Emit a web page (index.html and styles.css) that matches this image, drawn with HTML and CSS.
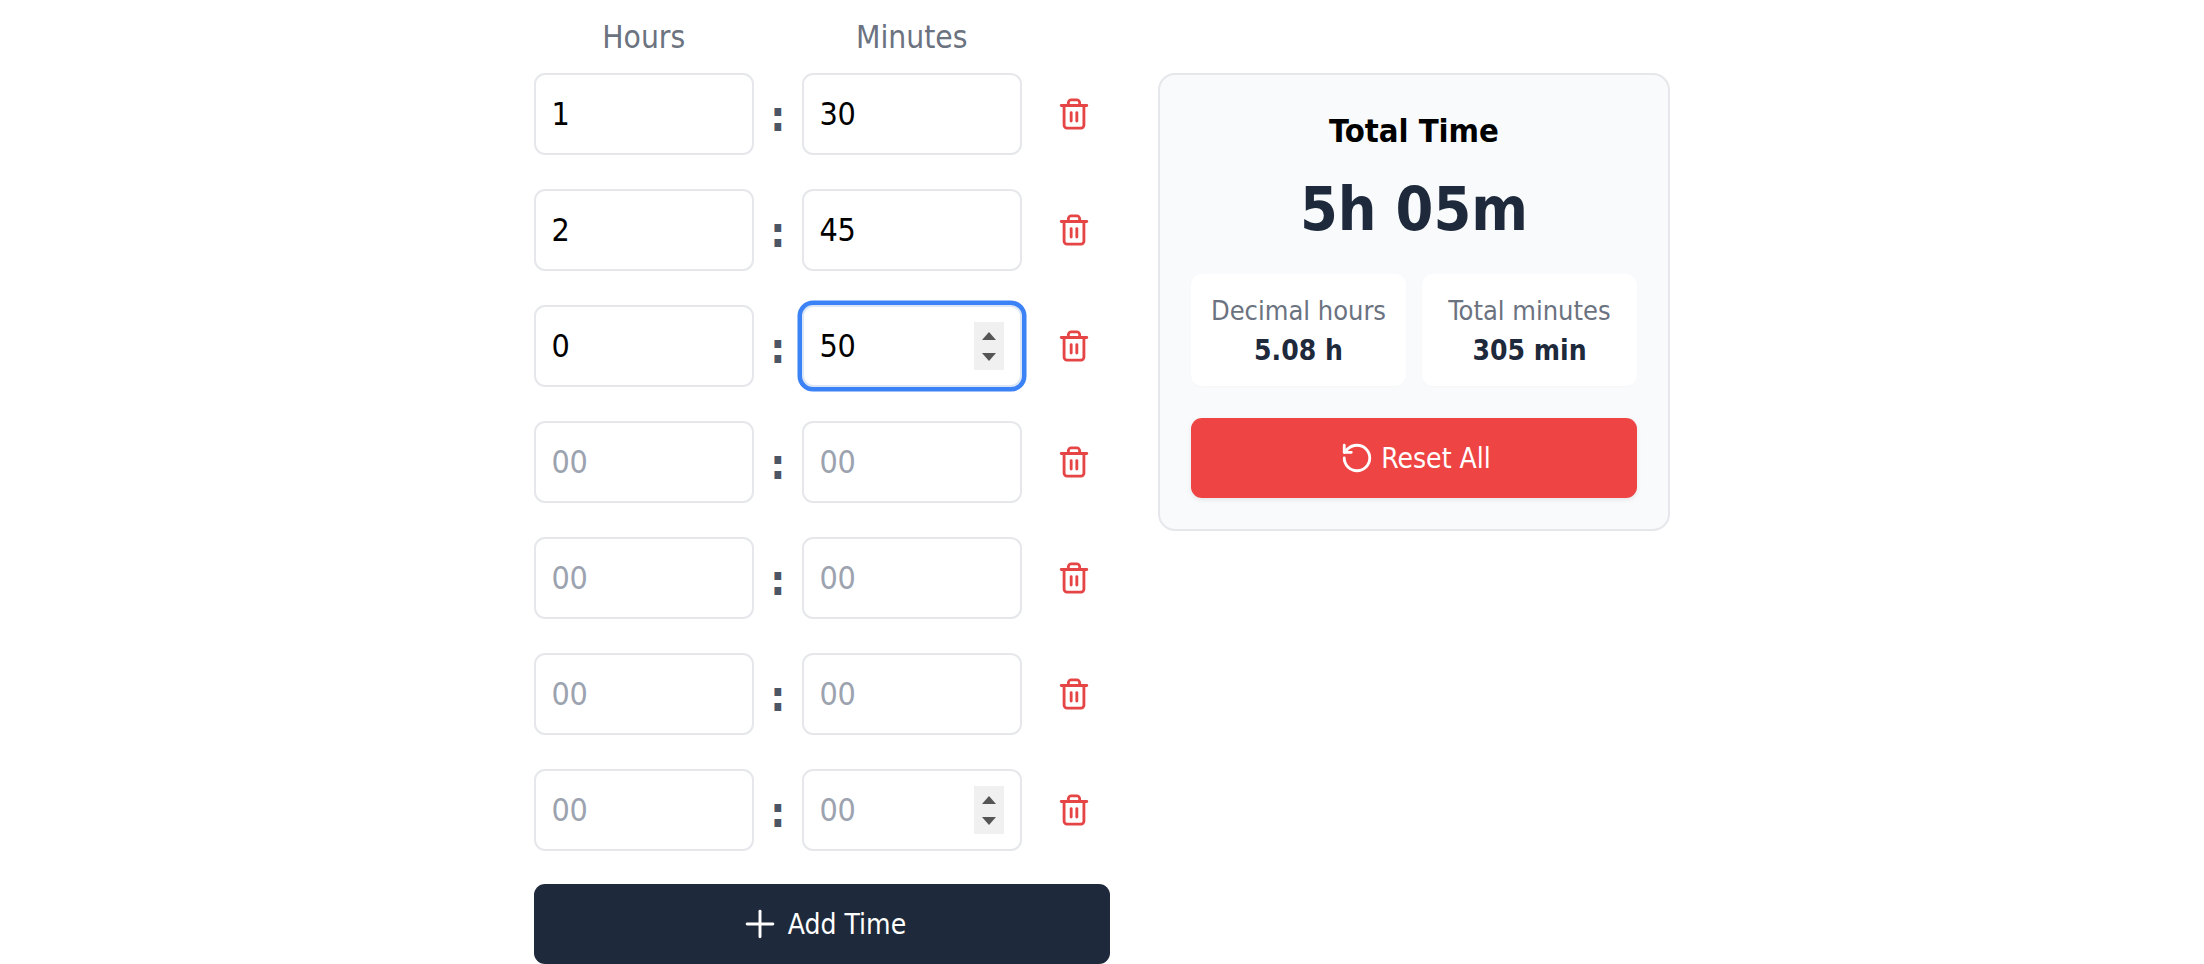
FILE: index.html
```html
<!DOCTYPE html>
<html lang="en">
<head>
<meta charset="utf-8">
<title>Time Calculator</title>
<link rel="stylesheet" href="styles.css">
</head>
<body>
<svg class="sprite" width="0" height="0" aria-hidden="true">
  <symbol id="trash" viewBox="0 0 24 24"><path d="M3 6h18"/><path d="M19 6v14c0 1-1 2-2 2H7c-1 0-2-1-2-2V6"/><path d="M8 6V4c0-1 1-2 2-2h4c1 0 2 1 2 2v2"/><path d="M10 11v6"/><path d="M14 11v6"/></symbol>
</svg>
<main class="layout">
  <section class="entries">
    <div class="labels">
      <span class="label">Hours</span>
      <span class="label label-min">Minutes</span>
    </div>
    <div class="rows">
      <div class="row">
        <input class="field" type="number" value="1" placeholder="00"><span class="colon">:</span>
        <input class="field" type="number" value="30" placeholder="00">
        <button class="del" type="button"><svg class="trash"><use href="#trash"/></svg></button>
      </div>
      <div class="row">
        <input class="field" type="number" value="2" placeholder="00"><span class="colon">:</span>
        <input class="field" type="number" value="45" placeholder="00">
        <button class="del" type="button"><svg class="trash"><use href="#trash"/></svg></button>
      </div>
      <div class="row">
        <input class="field" type="number" value="0" placeholder="00"><span class="colon">:</span>
        <div class="wrap">
          <input class="field field-focus" type="number" value="50" placeholder="00">
          <span class="spin"><i class="up"></i><i class="down"></i></span>
        </div>
        <button class="del" type="button"><svg class="trash"><use href="#trash"/></svg></button>
      </div>
      <div class="row">
        <input class="field" type="number" placeholder="00"><span class="colon">:</span>
        <input class="field" type="number" placeholder="00">
        <button class="del" type="button"><svg class="trash"><use href="#trash"/></svg></button>
      </div>
      <div class="row">
        <input class="field" type="number" placeholder="00"><span class="colon">:</span>
        <input class="field" type="number" placeholder="00">
        <button class="del" type="button"><svg class="trash"><use href="#trash"/></svg></button>
      </div>
      <div class="row">
        <input class="field" type="number" placeholder="00"><span class="colon">:</span>
        <input class="field" type="number" placeholder="00">
        <button class="del" type="button"><svg class="trash"><use href="#trash"/></svg></button>
      </div>
      <div class="row">
        <input class="field" type="number" placeholder="00"><span class="colon">:</span>
        <div class="wrap">
          <input class="field" type="number" placeholder="00">
          <span class="spin"><i class="up"></i><i class="down"></i></span>
        </div>
        <button class="del" type="button"><svg class="trash"><use href="#trash"/></svg></button>
      </div>
      <button class="add" type="button">
        <svg class="plus" viewBox="0 0 24 24"><path d="M5 12h14"/><path d="M12 5v14"/></svg>
        <span>Add Time</span>
      </button>
    </div>
  </section>
  <aside class="card">
    <h2 class="title">Total Time</h2>
    <p class="total">5h 05m</p>
    <div class="stats">
      <div class="stat"><span class="stat-label">Decimal hours</span><strong class="stat-value">5.08 h</strong></div>
      <div class="stat"><span class="stat-label">Total minutes</span><strong class="stat-value">305 min</strong></div>
    </div>
    <button class="reset" type="button">
      <svg class="ccw" viewBox="0 0 24 24"><path d="M3 12a9 9 0 1 0 9-9 9.75 9.75 0 0 0-6.74 2.74L3 8"/><path d="M3 3v5h5"/></svg>
      <span>Reset All</span>
    </button>
  </aside>
</main>
</body>
</html>
```
FILE: styles.css
```css
* { box-sizing: border-box; }
html, body { margin: 0; height: 964px; overflow: hidden; background: #fff; }
body { font-family: "DejaVu Sans Condensed", "DejaVu Sans", sans-serif; font-stretch: condensed; color: #000; }
.sprite { position: absolute; }
.layout { display: flex; gap: 48px; width: 1136px; margin: 0 auto; align-items: flex-start; }
.entries { width: 576px; flex: none; }
.labels { display: flex; height: 73px; padding-top: 18px; }
.label { width: 219.5px; text-align: center; font-size: 31.5px; line-height: 38px; color: #6b7280; }
.label-min { margin-left: 48.5px; }
.rows { display: flex; flex-direction: column; gap: 34px; }
.row { display: flex; align-items: center; height: 82px; }
.wrap { position: relative; width: 219.5px; height: 82px; flex: none; }
.field {
  width: 219.5px; height: 82px; flex: none; appearance: textfield;
  padding: 0 15.5px; border: 2.8px solid #e5e7eb; border-radius: 11px; background: #fff;
  font: inherit; font-size: 32px; letter-spacing: -0.4px; color: #000; outline: none;
}
.field::placeholder { color: #9ca3af; opacity: 1; }
.field::-webkit-inner-spin-button, .field::-webkit-outer-spin-button { appearance: none; margin: 0; }
.field-focus { border-color: #dbe6f6; box-shadow: 0 0 0 4.5px #3b82f6; }
.spin {
  position: absolute; left: 172px; top: 17px; width: 30px; height: 48px;
  display: flex; flex-direction: column; align-items: center; justify-content: center; gap: 13px; background: #f0f0f0;
}
.up { border: 7px solid transparent; border-top: 0; border-bottom: 8px solid #555; }
.down { border: 7px solid transparent; border-bottom: 0; border-top: 8px solid #555; }
.colon { width: 48.5px; flex: none; text-align: center; font-size: 42px; font-weight: 700; line-height: 1; color: #4b5563; padding-top: 6px; }
.del { margin-left: 32.5px; width: 40px; height: 40px; padding: 0; border: 0; background: none; display: flex; align-items: center; justify-content: center; }
.trash { width: 34px; height: 34px; fill: none; stroke: #e64545; stroke-width: 2; stroke-linecap: round; stroke-linejoin: round; }
.add, .reset {
  height: 80px; width: 100%; border: 0; border-radius: 11px; display: flex; align-items: center; justify-content: center;
  color: #fff; font: inherit; font-size: 28px;
}
.add { background: #1e293b; gap: 6px; margin-top: -1px; }
.plus { width: 44px; height: 44px; fill: none; stroke: #fff; stroke-width: 1.6; stroke-linecap: round; stroke-linejoin: round; }
.card {
  width: 512px; margin-top: 73px; height: 458px; padding: 31px 31px 0; flex: none;
  background: #f9fafb; border: 2.8px solid #e5e7eb; border-radius: 17px; text-align: center;
}
.title { margin: 0; font-size: 32.5px; line-height: 50px; font-weight: 700; color: #000; }
.total { margin: 15px 0 0; font-size: 60.5px; line-height: 76px; font-weight: 700; color: #1e293b; }
.stats { display: grid; grid-template-columns: 1fr 1fr; gap: 16px; margin-top: 27px; }
.stat { height: 112px; padding-top: 19px; background: #fff; border-radius: 11px; display: flex; flex-direction: column; box-shadow: 0 1px 3px rgba(0,0,0,.02); }
.stat-label { font-size: 27px; line-height: 36px; color: #6b7280; }
.stat-value { font-size: 28px; line-height: 40px; font-weight: 700; color: #1e293b; margin-top: 2px; }
.reset { background: #ef4444; gap: 7px; margin-top: 32px; padding-left: 9px; box-shadow: 0 2px 5px rgba(0,0,0,.08); }
.ccw { width: 34px; height: 34px; fill: none; stroke: #fff; stroke-width: 2; stroke-linecap: round; stroke-linejoin: round; }
```
